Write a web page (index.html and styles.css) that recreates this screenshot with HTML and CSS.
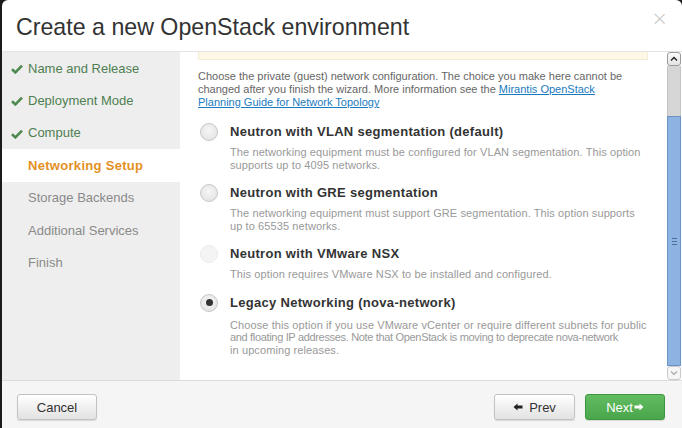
FILE: index.html
```html
<!DOCTYPE html>
<html>
<head>
<meta charset="utf-8">
<link rel="stylesheet" href="styles.css">
</head>
<body>
<div class="modal">
  <div class="modal-header">
    <h3 class="title">Create a new OpenStack environment</h3>
    <span class="close">×</span>
  </div>
  <div class="modal-body">
    <ul class="steps">
      <li class="step done"><svg class="check" viewBox="0 0 12 10"><path d="M1 5.2 L4.4 8.4 L11 1.6" fill="none" stroke="#4f8a4f" stroke-width="2.6"/></svg>Name and Release</li>
      <li class="step done"><svg class="check" viewBox="0 0 12 10"><path d="M1 5.2 L4.4 8.4 L11 1.6" fill="none" stroke="#4f8a4f" stroke-width="2.6"/></svg>Deployment Mode</li>
      <li class="step done"><svg class="check" viewBox="0 0 12 10"><path d="M1 5.2 L4.4 8.4 L11 1.6" fill="none" stroke="#4f8a4f" stroke-width="2.6"/></svg>Compute</li>
      <li class="step active">Networking Setup</li>
      <li class="step">Storage Backends</li>
      <li class="step">Additional Services</li>
      <li class="step">Finish</li>
    </ul>
    <div class="pane">
      <div class="content">
        <div class="alert"></div>
        <p class="intro">Choose the private (guest) network configuration. The choice you make here cannot be changed after you finish the wizard. More information see the <a href="#">Mirantis OpenStack Planning Guide for Network Topology</a></p>
        <div class="option">
          <span class="radio"></span>
          <div class="opt-text">
            <div class="opt-label">Neutron with VLAN segmentation (default)</div>
            <div class="opt-desc">The networking equipment must be configured for VLAN segmentation. This option supports up to 4095 networks.</div>
          </div>
        </div>
        <div class="option">
          <span class="radio"></span>
          <div class="opt-text">
            <div class="opt-label">Neutron with GRE segmentation</div>
            <div class="opt-desc">The networking equipment must support GRE segmentation. This option supports up to 65535 networks.</div>
          </div>
        </div>
        <div class="option">
          <span class="radio disabled"></span>
          <div class="opt-text">
            <div class="opt-label">Neutron with VMware NSX</div>
            <div class="opt-desc">This option requires VMware NSX to be installed and configured.</div>
          </div>
        </div>
        <div class="option">
          <span class="radio checked"></span>
          <div class="opt-text">
            <div class="opt-label">Legacy Networking (nova-network)</div>
            <div class="opt-desc lines"><span class="line">Choose this option if you use VMware vCenter or require different subnets for public</span><span class="line tight">and floating IP addresses. Note that OpenStack is moving to deprecate nova-network</span><span class="line">in upcoming releases.</span></div>
          </div>
        </div>
      </div>
      <div class="scrollbar">
        <div class="sb-btn"><svg viewBox="0 0 8 6"><path d="M1 4.5 L4 1.5 L7 4.5" fill="none" stroke="#222" stroke-width="1.4"/></svg></div>
        <div class="sb-track"></div>
        <div class="sb-thumb"><span class="grip"></span><span class="grip"></span><span class="grip"></span></div>
        <div class="sb-btn bottom"><svg viewBox="0 0 8 6"><path d="M1 1.5 L4 4.5 L7 1.5" fill="none" stroke="#aaa" stroke-width="1.2"/></svg></div>
      </div>
    </div>
  </div>
  <div class="modal-footer">
    <button class="btn">Cancel</button>
    <div class="nav">
      <button class="btn prev"><svg class="arrow" viewBox="0 0 10 8"><path d="M0.5 4 L4.5 0.5 L4.5 2.6 L9.5 2.6 L9.5 5.4 L4.5 5.4 L4.5 7.5 Z" fill="#222"/></svg>Prev</button>
      <button class="btn next">Next<svg class="arrow" viewBox="0 0 10 8"><path d="M9.5 4 L5.5 0.5 L5.5 2.6 L0.5 2.6 L0.5 5.4 L5.5 5.4 L5.5 7.5 Z" fill="#fff"/></svg></button>
    </div>
  </div>
</div>
</body>
</html>
```
FILE: styles.css
```css
* { box-sizing: border-box; }
html, body { margin: 0; padding: 0; }
body {
  background: #1b1b1b;
  width: 682px;
  height: 428px;
  overflow: hidden;
  font-family: "Liberation Sans", Arial, sans-serif;
}
.modal {
  margin-left: 2px;
  width: 680px;
  height: 428px;
  background: #fff;
  border-radius: 6px 6px 0 0;
  display: flex;
  flex-direction: column;
}
.modal-header {
  height: 52px;
  border-bottom: 1px solid #e5e5e5;
  display: flex;
  align-items: center;
  justify-content: space-between;
  padding: 3px 14px 0 14px;
}
.title {
  margin: 0;
  font-weight: normal;
  font-size: 23.2px;
  color: #333;
}
.close {
  font-size: 20px;
  color: #c4c4c4;
  align-self: flex-start;
  margin-top: 3px;
  margin-right: 0;
  font-family: "DejaVu Sans", sans-serif;
  font-weight: 300;
}
.modal-body {
  height: 328px;
  display: flex;
}
.steps {
  list-style: none;
  margin: 0;
  padding: 0;
  width: 178px;
  background: #eeeeee;
}
.step {
  height: 32.4px;
  display: flex;
  align-items: center;
  padding-left: 26px;
  font-size: 13px;
  color: #8a8a8a;
  position: relative;
}
.step.done { color: #4e7f52; }
.step.active {
  background: #fff;
  color: #e3901f;
  font-weight: bold;
  letter-spacing: 0.3px;
}
.check {
  position: absolute;
  left: 9px;
  top: 12px;
  width: 12px;
  height: 10px;
}
.pane {
  flex: 1;
  display: flex;
  min-width: 0;
}
.content {
  flex: 1;
  padding: 0 19px 0 18px;
  overflow: hidden;
}
.alert {
  height: 8px;
  background: #fdf8e6;
  border: 1px solid #f3ecd6;
  border-top: none;
}
.intro {
  margin: 10px 0 14px 0;
  width: 432px;
  font-size: 11px;
  line-height: 13px;
  color: #666;
}
.intro a {
  color: #1a7bbf;
  text-decoration: underline;
}
.option {
  display: flex;
  gap: 12px;
  margin-bottom: 13px;
  padding-left: 2px;
}
.radio {
  width: 18px;
  height: 18px;
  border-radius: 50%;
  flex: none;
  border: 1px solid #c8c8c8;
  background: radial-gradient(circle at 50% 40%, #f6f6f6 0%, #e6e6e6 70%, #dcdcdc 100%);
  display: flex;
  align-items: center;
  justify-content: center;
}
.radio.disabled {
  border-color: #ececec;
  background: #f4f4f4;
}
.radio.checked::after {
  content: "";
  width: 7px;
  height: 7px;
  border-radius: 50%;
  background: #333;
}
.opt-text { width: 417px; }
.opt-label {
  font-size: 13px;
  line-height: 18px;
  font-weight: bold;
  color: #333;
  letter-spacing: 0.3px;
}
.opt-desc {
  margin-top: 5px;
  font-size: 11px;
  line-height: 12.5px;
  color: #999;
  letter-spacing: 0.1px;
}
.opt-desc.lines {
  margin-top: 7px;
}
.line {
  display: block;
  white-space: nowrap;
}
.line.tight { letter-spacing: -0.33px; }
.scrollbar {
  width: 14px;
  display: flex;
  flex-direction: column;
  margin-right: 1px;
}
.sb-btn {
  height: 14px;
  border: 1px solid #9a9a9a;
  border-radius: 3px;
  background: linear-gradient(#fafafa, #e4e4e4);
  display: flex;
  align-items: center;
  justify-content: center;
}
.sb-btn svg { width: 8px; height: 6px; }
.sb-btn.bottom {
  border-color: #c9c9c9;
  background: #f6f6f6;
}
.sb-track {
  height: 50px;
  background: #d6d6d6;
  border-left: 1px solid #c3c3c3;
  border-right: 1px solid #c3c3c3;
}
.sb-thumb {
  flex: 1;
  background: #8db3e2;
  border: 1px solid #6d93c4;
  display: flex;
  flex-direction: column;
  align-items: center;
  justify-content: center;
  gap: 2px;
}
.grip {
  width: 5px;
  height: 1px;
  background: #4d6f9c;
}
.modal-footer {
  flex: 1;
  background: #f5f5f5;
  border-top: 1px solid #dcdcdc;
  display: flex;
  align-items: center;
  justify-content: space-between;
  padding: 5px 17px 0 15px;
}
.nav {
  display: flex;
  gap: 10px;
}
.btn {
  height: 26px;
  width: 80px;
  border: 1px solid #c2c2c2;
  border-radius: 3px;
  background: linear-gradient(#ffffff, #e2e2e2);
  box-shadow: 0 1px 1px rgba(0,0,0,0.12);
  font-family: "Liberation Sans", Arial, sans-serif;
  font-size: 13px;
  color: #333;
  display: flex;
  align-items: center;
  justify-content: center;
  gap: 6px;
  padding: 0;
}
.btn.prev { width: 81px; }
.btn.next {
  background: linear-gradient(#62bd62, #4aa64a);
  border-color: #3f963f;
  color: #fff;
  gap: 1px;
}
.arrow { width: 10px; height: 8px; }
```
